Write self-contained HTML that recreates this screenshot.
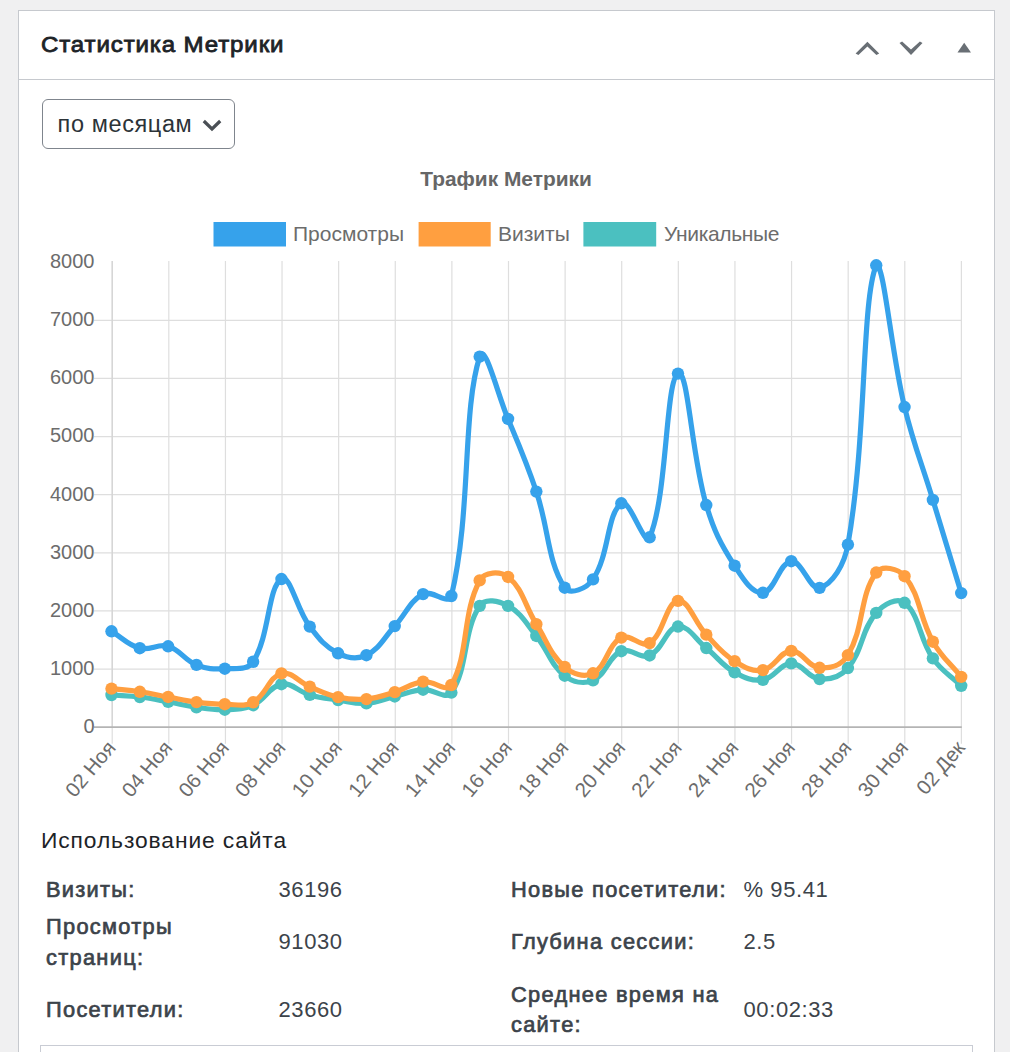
<!DOCTYPE html>
<html><head><meta charset="utf-8">
<style>
html,body{margin:0;padding:0;}
body{width:1010px;height:1052px;background:#f0f0f1;position:relative;overflow:hidden;font-family:"Liberation Sans",sans-serif;}
.panel{position:absolute;left:18px;top:9.5px;width:977px;height:1100px;background:#fff;border:1.8px solid #c6c9ce;box-sizing:border-box;}
.hdr{position:absolute;left:18px;top:78.5px;width:977px;height:1.8px;background:#c6c9ce;}
.t{position:absolute;white-space:nowrap;}
.h2{left:41px;top:30.3px;font-size:22.4px;font-weight:normal;color:#1d2327;letter-spacing:0.8px;line-height:30px;-webkit-text-stroke:0.8px #1d2327;transform:scaleX(1.075);transform-origin:0 0;}
.sel{position:absolute;left:41.5px;top:98.8px;width:193.6px;height:50.5px;border:1.8px solid #7f858d;border-radius:6px;box-sizing:border-box;background:#fff;}
.seltxt{left:57.6px;top:109px;font-size:23.5px;color:#2c3338;line-height:30px;letter-spacing:0.6px;}
svg{position:absolute;left:0;top:0;}
.yl{font-size:20px;fill:#6c6c6c;font-family:"Liberation Sans",sans-serif;}
.xl{font-size:20.4px;fill:#6c6c6c;font-family:"Liberation Sans",sans-serif;}
.ctitle{font-size:20.9px;font-weight:bold;fill:#666;font-family:"Liberation Sans",sans-serif;}
.leg{font-size:21px;fill:#6c6c6c;font-family:"Liberation Sans",sans-serif;}
.usage{left:41px;top:824.6px;font-size:22.8px;color:#1d2327;line-height:30px;letter-spacing:0.9px;}
table{position:absolute;left:41px;top:871.6px;width:930px;border-collapse:collapse;table-layout:fixed;font-size:22px;color:#3c434a;letter-spacing:0.6px;}
td{padding:3.5px 0 3.5px 5px;vertical-align:middle;line-height:30.2px;}
td.l{font-weight:normal;letter-spacing:1.3px;font-size:21.8px;-webkit-text-stroke:0.7px #3c434a;}
.bbox{position:absolute;left:40.1px;top:1045px;width:933.4px;height:40px;border:1.9px solid #c9ccd4;box-sizing:border-box;}
</style></head><body>
<div class="panel"></div>
<div class="hdr"></div>
<div class="t h2">Статистика Метрики</div>
<svg width="1010" height="80" style="top:0">
<path d="M867.4,41.7 L855.6,53.5 L858.4,55.0 L867.4,46.6 L876.4,55.0 L879.2,53.5 Z" fill="#696f75"/>
<path d="M899.5,43.1 L902.1,41.6 L911,49.6 L919.9,41.6 L922.5,43.1 L911,55.0 Z" fill="#696f75"/>
<path d="M957.5,52.5 L964.2,42.7 L971,52.5 Z" fill="#696f75"/>
</svg>
<div class="sel"></div>
<div class="t seltxt">по месяцам</div>
<svg width="1010" height="160" style="top:0">
<path d="M203.8,121 L212,129 L220.2,121" fill="none" stroke="#4a4f55" stroke-width="3.2"/>
</svg>
<svg width="1010" height="820">
<text x="506" y="185.7" text-anchor="middle" class="ctitle">Трафик Метрики</text>
<rect x="213.5" y="222" width="72.5" height="24.5" fill="#36a2eb"/>
<text x="293" y="241.4" class="leg">Просмотры</text>
<rect x="418.6" y="222" width="72.1" height="24.5" fill="#ff9f40"/>
<text x="498" y="241.4" class="leg">Визиты</text>
<rect x="583.4" y="222" width="72.8" height="24.5" fill="#4bc0c0"/>
<text x="664" y="241.4" class="leg" letter-spacing="-0.35">Уникальные</text>
<line x1="94" y1="669.07" x2="961.40" y2="669.07" stroke="#dedede" stroke-width="1.2"/>
<line x1="94" y1="610.94" x2="961.40" y2="610.94" stroke="#dedede" stroke-width="1.2"/>
<line x1="94" y1="552.81" x2="961.40" y2="552.81" stroke="#dedede" stroke-width="1.2"/>
<line x1="94" y1="494.68" x2="961.40" y2="494.68" stroke="#dedede" stroke-width="1.2"/>
<line x1="94" y1="436.55" x2="961.40" y2="436.55" stroke="#dedede" stroke-width="1.2"/>
<line x1="94" y1="378.42" x2="961.40" y2="378.42" stroke="#dedede" stroke-width="1.2"/>
<line x1="94" y1="320.29" x2="961.40" y2="320.29" stroke="#dedede" stroke-width="1.2"/>
<line x1="112.20" y1="261" x2="112.20" y2="743.8" stroke="#dedede" stroke-width="1.2"/>
<line x1="168.81" y1="261" x2="168.81" y2="743.8" stroke="#dedede" stroke-width="1.2"/>
<line x1="225.43" y1="261" x2="225.43" y2="743.8" stroke="#dedede" stroke-width="1.2"/>
<line x1="282.04" y1="261" x2="282.04" y2="743.8" stroke="#dedede" stroke-width="1.2"/>
<line x1="338.65" y1="261" x2="338.65" y2="743.8" stroke="#dedede" stroke-width="1.2"/>
<line x1="395.27" y1="261" x2="395.27" y2="743.8" stroke="#dedede" stroke-width="1.2"/>
<line x1="451.88" y1="261" x2="451.88" y2="743.8" stroke="#dedede" stroke-width="1.2"/>
<line x1="508.49" y1="261" x2="508.49" y2="743.8" stroke="#dedede" stroke-width="1.2"/>
<line x1="565.11" y1="261" x2="565.11" y2="743.8" stroke="#dedede" stroke-width="1.2"/>
<line x1="621.72" y1="261" x2="621.72" y2="743.8" stroke="#dedede" stroke-width="1.2"/>
<line x1="678.33" y1="261" x2="678.33" y2="743.8" stroke="#dedede" stroke-width="1.2"/>
<line x1="734.95" y1="261" x2="734.95" y2="743.8" stroke="#dedede" stroke-width="1.2"/>
<line x1="791.56" y1="261" x2="791.56" y2="743.8" stroke="#dedede" stroke-width="1.2"/>
<line x1="848.17" y1="261" x2="848.17" y2="743.8" stroke="#dedede" stroke-width="1.2"/>
<line x1="904.79" y1="261" x2="904.79" y2="743.8" stroke="#dedede" stroke-width="1.2"/>
<line x1="961.40" y1="261" x2="961.40" y2="743.8" stroke="#dedede" stroke-width="1.2"/>
<line x1="112.20" y1="261" x2="112.20" y2="727.20" stroke="#d2d2d2" stroke-width="1.1"/>
<line x1="94" y1="727.20" x2="961.80" y2="727.20" stroke="#b4b4b4" stroke-width="1.7"/>
<text x="94.5" y="733.10" text-anchor="end" class="yl">0</text>
<text x="94.5" y="674.97" text-anchor="end" class="yl">1000</text>
<text x="94.5" y="616.84" text-anchor="end" class="yl">2000</text>
<text x="94.5" y="558.71" text-anchor="end" class="yl">3000</text>
<text x="94.5" y="500.58" text-anchor="end" class="yl">4000</text>
<text x="94.5" y="442.45" text-anchor="end" class="yl">5000</text>
<text x="94.5" y="384.32" text-anchor="end" class="yl">6000</text>
<text x="94.5" y="326.19" text-anchor="end" class="yl">7000</text>
<text x="94.5" y="268.06" text-anchor="end" class="yl">8000</text>
<text transform="translate(111.40,743.80) rotate(-50)" x="0" y="7" text-anchor="end" class="xl">02 Ноя</text>
<text transform="translate(168.01,743.80) rotate(-50)" x="0" y="7" text-anchor="end" class="xl">04 Ноя</text>
<text transform="translate(224.63,743.80) rotate(-50)" x="0" y="7" text-anchor="end" class="xl">06 Ноя</text>
<text transform="translate(281.24,743.80) rotate(-50)" x="0" y="7" text-anchor="end" class="xl">08 Ноя</text>
<text transform="translate(337.85,743.80) rotate(-50)" x="0" y="7" text-anchor="end" class="xl">10 Ноя</text>
<text transform="translate(394.47,743.80) rotate(-50)" x="0" y="7" text-anchor="end" class="xl">12 Ноя</text>
<text transform="translate(451.08,743.80) rotate(-50)" x="0" y="7" text-anchor="end" class="xl">14 Ноя</text>
<text transform="translate(507.69,743.80) rotate(-50)" x="0" y="7" text-anchor="end" class="xl">16 Ноя</text>
<text transform="translate(564.31,743.80) rotate(-50)" x="0" y="7" text-anchor="end" class="xl">18 Ноя</text>
<text transform="translate(620.92,743.80) rotate(-50)" x="0" y="7" text-anchor="end" class="xl">20 Ноя</text>
<text transform="translate(677.53,743.80) rotate(-50)" x="0" y="7" text-anchor="end" class="xl">22 Ноя</text>
<text transform="translate(734.15,743.80) rotate(-50)" x="0" y="7" text-anchor="end" class="xl">24 Ноя</text>
<text transform="translate(790.76,743.80) rotate(-50)" x="0" y="7" text-anchor="end" class="xl">26 Ноя</text>
<text transform="translate(847.37,743.80) rotate(-50)" x="0" y="7" text-anchor="end" class="xl">28 Ноя</text>
<text transform="translate(903.99,743.80) rotate(-50)" x="0" y="7" text-anchor="end" class="xl">30 Ноя</text>
<text transform="translate(960.60,743.80) rotate(-50)" x="0" y="7" text-anchor="end" class="xl">02 Дек</text>
<path d="M111.50,695.00C122.83,695.81 128.56,695.68 139.82,697.03C151.22,698.40 156.84,699.74 168.15,701.80C179.50,703.86 185.05,705.73 196.47,707.32C207.71,708.89 213.51,710.12 224.79,709.70C236.17,709.28 242.96,709.80 253.12,705.23C265.62,699.60 269.25,686.41 281.44,684.18C291.90,682.27 298.15,691.64 309.76,694.88C320.81,697.96 326.71,698.28 338.09,700.00C349.37,701.70 355.21,704.13 366.41,703.42C377.86,702.71 383.39,699.20 394.73,696.45C406.05,693.71 411.60,690.48 423.06,689.71C434.26,688.95 445.99,700.59 451.38,692.61C468.65,667.06 462.41,632.36 479.70,605.88C485.07,597.66 498.81,600.99 508.03,605.88C521.47,613.03 525.95,623.18 536.35,635.99C548.61,651.11 550.41,664.52 564.67,675.70C573.07,682.28 583.62,684.46 593.00,680.41C606.28,674.67 608.02,657.08 621.32,651.22C630.68,647.10 640.26,659.56 649.64,655.47C662.92,649.68 665.90,628.10 677.97,626.52C688.56,625.13 695.23,639.09 706.29,648.03C717.89,657.41 721.92,665.20 734.61,672.33C744.58,677.92 752.24,681.51 762.94,679.82C774.90,677.93 779.86,663.54 791.26,663.37C802.52,663.21 807.90,678.05 819.58,679.01C830.56,679.91 840.45,676.72 847.91,668.02C863.11,650.28 860.98,630.48 876.23,612.92C883.63,604.39 897.18,596.89 904.55,602.80C919.84,615.07 918.99,638.03 932.88,658.37C941.65,671.24 949.87,674.84 961.20,685.81" fill="none" stroke="#4bc0c0" stroke-width="5.2" stroke-linejoin="round" stroke-linecap="butt"/>
<circle cx="111.50" cy="695.00" r="6.2" fill="#4bc0c0"/><circle cx="139.82" cy="697.03" r="6.2" fill="#4bc0c0"/><circle cx="168.15" cy="701.80" r="6.2" fill="#4bc0c0"/><circle cx="196.47" cy="707.32" r="6.2" fill="#4bc0c0"/><circle cx="224.79" cy="709.70" r="6.2" fill="#4bc0c0"/><circle cx="253.12" cy="705.23" r="6.2" fill="#4bc0c0"/><circle cx="281.44" cy="684.18" r="6.2" fill="#4bc0c0"/><circle cx="309.76" cy="694.88" r="6.2" fill="#4bc0c0"/><circle cx="338.09" cy="700.00" r="6.2" fill="#4bc0c0"/><circle cx="366.41" cy="703.42" r="6.2" fill="#4bc0c0"/><circle cx="394.73" cy="696.45" r="6.2" fill="#4bc0c0"/><circle cx="423.06" cy="689.71" r="6.2" fill="#4bc0c0"/><circle cx="451.38" cy="692.61" r="6.2" fill="#4bc0c0"/><circle cx="479.70" cy="605.88" r="6.2" fill="#4bc0c0"/><circle cx="508.03" cy="605.88" r="6.2" fill="#4bc0c0"/><circle cx="536.35" cy="635.99" r="6.2" fill="#4bc0c0"/><circle cx="564.67" cy="675.70" r="6.2" fill="#4bc0c0"/><circle cx="593.00" cy="680.41" r="6.2" fill="#4bc0c0"/><circle cx="621.32" cy="651.22" r="6.2" fill="#4bc0c0"/><circle cx="649.64" cy="655.47" r="6.2" fill="#4bc0c0"/><circle cx="677.97" cy="626.52" r="6.2" fill="#4bc0c0"/><circle cx="706.29" cy="648.03" r="6.2" fill="#4bc0c0"/><circle cx="734.61" cy="672.33" r="6.2" fill="#4bc0c0"/><circle cx="762.94" cy="679.82" r="6.2" fill="#4bc0c0"/><circle cx="791.26" cy="663.37" r="6.2" fill="#4bc0c0"/><circle cx="819.58" cy="679.01" r="6.2" fill="#4bc0c0"/><circle cx="847.91" cy="668.02" r="6.2" fill="#4bc0c0"/><circle cx="876.23" cy="612.92" r="6.2" fill="#4bc0c0"/><circle cx="904.55" cy="602.80" r="6.2" fill="#4bc0c0"/><circle cx="932.88" cy="658.37" r="6.2" fill="#4bc0c0"/><circle cx="961.20" cy="685.81" r="6.2" fill="#4bc0c0"/>

<path d="M111.50,688.60C122.83,689.88 128.55,690.13 139.82,691.80C151.21,693.48 156.82,694.91 168.15,696.97C179.47,699.03 185.07,700.64 196.47,702.09C207.72,703.52 213.46,704.15 224.79,704.18C236.12,704.22 243.76,707.33 253.12,702.26C266.42,695.05 268.66,677.02 281.44,673.49C291.32,670.76 298.24,681.83 309.76,686.63C320.90,691.27 326.41,694.51 338.09,697.09C349.07,699.51 355.23,700.10 366.41,699.12C377.89,698.12 383.60,695.59 394.73,692.15C406.26,688.59 411.40,683.10 423.06,681.63C434.06,680.24 446.66,693.43 451.38,685.00C469.32,652.95 461.77,614.62 479.70,580.42C484.43,571.42 500.29,571.02 508.03,576.99C522.95,588.52 524.62,605.57 536.35,624.19C547.28,641.54 550.21,654.38 564.67,666.92C572.87,674.02 584.18,677.87 593.00,673.31C606.84,666.16 607.45,645.03 621.32,637.62C630.10,632.93 641.44,648.41 649.64,643.09C664.10,633.69 665.83,602.63 677.97,600.83C688.49,599.26 694.24,621.81 706.29,634.66C716.90,645.97 721.77,653.18 734.61,661.22C744.43,667.37 752.41,672.04 762.94,670.12C775.07,667.90 779.72,651.35 791.26,650.88C802.38,650.42 807.91,666.92 819.58,667.79C830.57,668.61 841.96,665.11 847.91,655.12C864.62,627.02 859.16,596.37 876.23,572.57C881.82,564.79 898.08,568.28 904.55,576.18C920.74,595.93 919.00,617.02 932.88,641.69C941.66,657.32 949.87,662.83 961.20,676.92" fill="none" stroke="#ff9f40" stroke-width="5.2" stroke-linejoin="round" stroke-linecap="butt"/>
<circle cx="111.50" cy="688.60" r="6.2" fill="#ff9f40"/><circle cx="139.82" cy="691.80" r="6.2" fill="#ff9f40"/><circle cx="168.15" cy="696.97" r="6.2" fill="#ff9f40"/><circle cx="196.47" cy="702.09" r="6.2" fill="#ff9f40"/><circle cx="224.79" cy="704.18" r="6.2" fill="#ff9f40"/><circle cx="253.12" cy="702.26" r="6.2" fill="#ff9f40"/><circle cx="281.44" cy="673.49" r="6.2" fill="#ff9f40"/><circle cx="309.76" cy="686.63" r="6.2" fill="#ff9f40"/><circle cx="338.09" cy="697.09" r="6.2" fill="#ff9f40"/><circle cx="366.41" cy="699.12" r="6.2" fill="#ff9f40"/><circle cx="394.73" cy="692.15" r="6.2" fill="#ff9f40"/><circle cx="423.06" cy="681.63" r="6.2" fill="#ff9f40"/><circle cx="451.38" cy="685.00" r="6.2" fill="#ff9f40"/><circle cx="479.70" cy="580.42" r="6.2" fill="#ff9f40"/><circle cx="508.03" cy="576.99" r="6.2" fill="#ff9f40"/><circle cx="536.35" cy="624.19" r="6.2" fill="#ff9f40"/><circle cx="564.67" cy="666.92" r="6.2" fill="#ff9f40"/><circle cx="593.00" cy="673.31" r="6.2" fill="#ff9f40"/><circle cx="621.32" cy="637.62" r="6.2" fill="#ff9f40"/><circle cx="649.64" cy="643.09" r="6.2" fill="#ff9f40"/><circle cx="677.97" cy="600.83" r="6.2" fill="#ff9f40"/><circle cx="706.29" cy="634.66" r="6.2" fill="#ff9f40"/><circle cx="734.61" cy="661.22" r="6.2" fill="#ff9f40"/><circle cx="762.94" cy="670.12" r="6.2" fill="#ff9f40"/><circle cx="791.26" cy="650.88" r="6.2" fill="#ff9f40"/><circle cx="819.58" cy="667.79" r="6.2" fill="#ff9f40"/><circle cx="847.91" cy="655.12" r="6.2" fill="#ff9f40"/><circle cx="876.23" cy="572.57" r="6.2" fill="#ff9f40"/><circle cx="904.55" cy="576.18" r="6.2" fill="#ff9f40"/><circle cx="932.88" cy="641.69" r="6.2" fill="#ff9f40"/><circle cx="961.20" cy="676.92" r="6.2" fill="#ff9f40"/>

<path d="M111.50,631.29C122.83,638.05 127.64,644.98 139.82,648.20C150.30,650.98 157.82,643.24 168.15,646.28C180.48,649.91 184.18,660.02 196.47,664.88C206.84,668.99 213.58,669.34 224.79,668.72C236.24,668.09 247.45,670.72 253.12,661.75C270.11,634.84 267.56,587.64 281.44,579.03C290.22,573.57 296.46,609.14 309.76,626.58C319.12,638.85 324.98,646.70 338.09,653.32C347.64,658.14 357.08,659.66 366.41,655.18C379.74,648.77 383.70,638.01 394.73,626.11C406.36,613.57 409.44,601.32 423.06,594.08C432.10,589.28 448.99,606.01 451.38,596.00C471.65,511.02 462.06,411.76 479.70,356.62C484.72,340.95 497.43,393.74 508.03,418.99C520.09,447.73 526.44,462.07 536.35,491.60C549.09,529.55 547.17,560.57 564.67,587.69C569.83,595.68 586.96,588.38 593.00,579.38C609.61,554.62 606.65,514.18 621.32,503.28C629.31,497.34 644.88,548.20 649.64,537.29C667.54,496.33 665.44,380.73 677.97,373.60C688.10,367.82 691.17,453.73 706.29,505.03C713.82,530.58 720.32,543.57 734.61,565.71C742.98,578.68 752.05,593.66 762.94,592.80C774.71,591.87 779.44,562.27 791.26,561.24C802.10,560.29 809.86,590.72 819.58,587.86C832.52,584.07 844.38,564.68 847.91,544.61C867.04,435.65 861.27,301.63 876.23,265.30C883.93,262.00 891.00,350.89 904.55,407.02C913.66,444.74 921.56,462.75 932.88,499.91C944.22,537.18 949.87,555.82 961.20,593.09" fill="none" stroke="#36a2eb" stroke-width="5.2" stroke-linejoin="round" stroke-linecap="butt"/>
<circle cx="111.50" cy="631.29" r="6.2" fill="#36a2eb"/><circle cx="139.82" cy="648.20" r="6.2" fill="#36a2eb"/><circle cx="168.15" cy="646.28" r="6.2" fill="#36a2eb"/><circle cx="196.47" cy="664.88" r="6.2" fill="#36a2eb"/><circle cx="224.79" cy="668.72" r="6.2" fill="#36a2eb"/><circle cx="253.12" cy="661.75" r="6.2" fill="#36a2eb"/><circle cx="281.44" cy="579.03" r="6.2" fill="#36a2eb"/><circle cx="309.76" cy="626.58" r="6.2" fill="#36a2eb"/><circle cx="338.09" cy="653.32" r="6.2" fill="#36a2eb"/><circle cx="366.41" cy="655.18" r="6.2" fill="#36a2eb"/><circle cx="394.73" cy="626.11" r="6.2" fill="#36a2eb"/><circle cx="423.06" cy="594.08" r="6.2" fill="#36a2eb"/><circle cx="451.38" cy="596.00" r="6.2" fill="#36a2eb"/><circle cx="479.70" cy="356.62" r="6.2" fill="#36a2eb"/><circle cx="508.03" cy="418.99" r="6.2" fill="#36a2eb"/><circle cx="536.35" cy="491.60" r="6.2" fill="#36a2eb"/><circle cx="564.67" cy="587.69" r="6.2" fill="#36a2eb"/><circle cx="593.00" cy="579.38" r="6.2" fill="#36a2eb"/><circle cx="621.32" cy="503.28" r="6.2" fill="#36a2eb"/><circle cx="649.64" cy="537.29" r="6.2" fill="#36a2eb"/><circle cx="677.97" cy="373.60" r="6.2" fill="#36a2eb"/><circle cx="706.29" cy="505.03" r="6.2" fill="#36a2eb"/><circle cx="734.61" cy="565.71" r="6.2" fill="#36a2eb"/><circle cx="762.94" cy="592.80" r="6.2" fill="#36a2eb"/><circle cx="791.26" cy="561.24" r="6.2" fill="#36a2eb"/><circle cx="819.58" cy="587.86" r="6.2" fill="#36a2eb"/><circle cx="847.91" cy="544.61" r="6.2" fill="#36a2eb"/><circle cx="876.23" cy="265.30" r="6.2" fill="#36a2eb"/><circle cx="904.55" cy="407.02" r="6.2" fill="#36a2eb"/><circle cx="932.88" cy="499.91" r="6.2" fill="#36a2eb"/><circle cx="961.20" cy="593.09" r="6.2" fill="#36a2eb"/>

</svg>
<div class="t usage">Использование сайта</div>
<table>
<colgroup><col><col><col><col></colgroup>
<tr><td class="l">Визиты:</td><td>36196</td><td class="l">Новые посетители:</td><td>% 95.41</td></tr>
<tr><td class="l">Просмотры<br>страниц:</td><td>91030</td><td class="l">Глубина сессии:</td><td>2.5</td></tr>
<tr><td class="l">Посетители:</td><td>23660</td><td class="l">Среднее время на<br>сайте:</td><td>00:02:33</td></tr>
</table>
<div class="bbox"></div>
</body></html>
